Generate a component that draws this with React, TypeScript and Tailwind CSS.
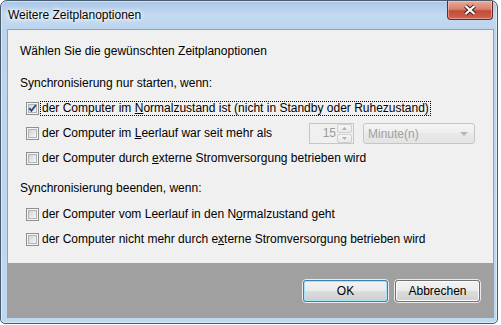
import type { ReactNode } from 'react';

const FONT = "font-['Liberation_Sans',Arial,sans-serif]";

function CheckBox({ checked }: { checked?: boolean }) {
  return (
    <svg width="13" height="13" viewBox="0 0 13 13" className="shrink-0">
      <defs>
        <linearGradient id="cbfill" x1="0" y1="0" x2="1" y2="1">
          <stop offset="0" stopColor="#cdd1d7" />
          <stop offset="1" stopColor="#f9f9f9" />
        </linearGradient>
      </defs>
      <rect x="0.5" y="0.5" width="12" height="12" fill="#f5f5f5" stroke="#8e8f8f" />
      <rect x="2.5" y="2.5" width="8" height="8" fill="url(#cbfill)" stroke="#b1b5ba" />
      {checked && <path d="M3.2 6.2 L5.4 8.8 L9.9 3" fill="none" stroke="#34477e" strokeWidth="1.9" />}
    </svg>
  );
}

function Label({ focused, children }: { focused?: boolean; children: ReactNode }) {
  return (
    <span
      className={
        'ml-[1px] whitespace-nowrap border px-[1px] leading-[13px] ' +
        (focused ? 'border-dotted border-black' : 'border-transparent')
      }
    >
      {children}
    </span>
  );
}

function Row({ checked, focused, children }: { checked?: boolean; focused?: boolean; children: ReactNode }) {
  return (
    <div className="flex h-[25px] items-center pl-[18px]">
      <CheckBox checked={checked} />
      <Label focused={focused}>{children}</Label>
    </div>
  );
}

function Button({ label, primary }: { label: string; primary?: boolean }) {
  return (
    <div className="rounded-[4px] border border-[#ececec]">
      <div
        className={
          'flex h-[22px] w-[85px] items-center justify-center rounded-[3px] border bg-[linear-gradient(#f2f2f2,#ebebeb_50%,#dddddd_50%,#cfcfcf)] ' +
          (primary
            ? 'border-[#3c7fb1] shadow-[inset_0_0_0_1px_#a6e3f9]'
            : 'border-[#707070] shadow-[inset_0_0_0_1px_#fbfbfb]')
        }
      >
        {label}
      </div>
    </div>
  );
}

function CloseGlyph() {
  return (
    <svg width="14" height="12" viewBox="0 0 14 12">
      <path d="M2.5 2 L11.5 10 M11.5 2 L2.5 10" stroke="#41201c" strokeWidth="4.2" />
      <path d="M2.5 2 L11.5 10 M11.5 2 L2.5 10" stroke="#ffffff" strokeWidth="2.2" />
    </svg>
  );
}

export default function App() {
  return (
    <div className={`h-[325px] w-[501px] bg-white text-[12px] text-black ${FONT}`}>
      <div className="flex h-[324px] w-[498px] flex-col rounded-t-[7px] rounded-b-[5px] border border-[#4a5b6e] bg-[linear-gradient(180deg,#a9c5e6_0px,#c3d9f1_14px,#bcd4ee_30px,#c0d7f0_100%)] shadow-[inset_0_0_0_1px_rgba(255,255,255,0.45)]">
        {/* title bar */}
        <div className="flex h-[28px] items-start">
          <span className="ml-[7px] mt-[6px] leading-[16px] [text-shadow:0_0_8px_#fff,0_0_5px_#fff,0_0_3px_#fff]">
            Weitere Zeitplanoptionen
          </span>
          <div className="ml-auto mr-[4px] flex h-[19px] w-[46px] items-center justify-center rounded-b-[4px] border border-t-0 border-[#6a2a24] bg-[linear-gradient(#eaa99c,#d7826f_45%,#c44b37_55%,#d16452)] shadow-[inset_0_0_0_1px_rgba(255,220,210,0.45)]">
            <CloseGlyph />
          </div>
        </div>

        {/* client area */}
        <div className="mb-[5px] ml-[6px] mr-[3px] flex flex-1 flex-col border border-[#8da2bb]">
          <div className="flex h-[233px] flex-col bg-[#f0f0f0]">
            <div className="mt-[13px] pl-[12px] leading-[16px]">Wählen Sie die gewünschten Zeitplanoptionen</div>
            <div className="mt-[16px] pl-[12px] leading-[16px]">Synchronisierung nur starten, wenn:</div>
            <div className="mt-[5px]">
              <Row checked focused>
                der Computer im <u>N</u>ormalzustand ist (nicht in Standby oder Ruhezustand)
              </Row>
              <div className="flex h-[25px] items-center pl-[18px]">
                <div className="flex w-[283px] items-center">
                  <CheckBox />
                  <Label>der Computer im <u>L</u>eerlauf war seit mehr als</Label>
                </div>
                <div className="flex h-[21px] w-[45px] border border-[#c4c6ca] bg-[#f0f0f0]">
                  <div className="flex-1 pr-[1px] text-right leading-[19px] text-[#9a9a9a]">15</div>
                  <div className="flex w-[16px] flex-col gap-[1px] pr-[1px]">
                    <div className="flex flex-1 items-center justify-center rounded-[2px] border border-[#cfcfcf] bg-[linear-gradient(#f6f6f6,#e9e9e9)]">
                      <svg width="5" height="3" viewBox="0 0 5 3"><path d="M0 3 L2.5 0 L5 3 Z" fill="#b0b0b0" /></svg>
                    </div>
                    <div className="flex flex-1 items-center justify-center rounded-[2px] border border-[#cfcfcf] bg-[linear-gradient(#f6f6f6,#e9e9e9)]">
                      <svg width="5" height="3" viewBox="0 0 5 3"><path d="M0 0 L5 0 L2.5 3 Z" fill="#b0b0b0" /></svg>
                    </div>
                  </div>
                </div>
                <div className="ml-[9px] flex h-[21px] w-[112px] items-center rounded-[3px] border border-[#c6c6c6] bg-[linear-gradient(#f4f4f4,#eeeeee_50%,#e8e8e8_50%,#e4e4e4)] pl-[4px] pr-[6px] text-[#a0a0a0]">
                  <span>Minute(n)</span>
                  <svg className="ml-auto" width="8" height="4" viewBox="0 0 8 4"><path d="M0 0 L8 0 L4 4 Z" fill="#b5b5b5" /></svg>
                </div>
              </div>
              <Row>der Computer durch <u>e</u>xterne Stromversorgung betrieben wird</Row>
            </div>
            <div className="mt-[9px] pl-[12px] leading-[16px]">Synchronisierung beenden, wenn:</div>
            <div className="mt-[6px]">
              <Row>der Computer vom Leerlauf in den N<u>o</u>rmalzustand geht</Row>
              <Row>der Computer nicht mehr durch e<u>x</u>terne Stromversorgung betrieben wird</Row>
            </div>
          </div>

          {/* footer */}
          <div className="flex flex-1 items-start justify-end gap-[5px] bg-[#a0a0a0] pr-[12px] pt-[16px]">
            <Button label="OK" primary />
            <Button label="Abbrechen" />
          </div>
        </div>
      </div>
    </div>
  );
}
